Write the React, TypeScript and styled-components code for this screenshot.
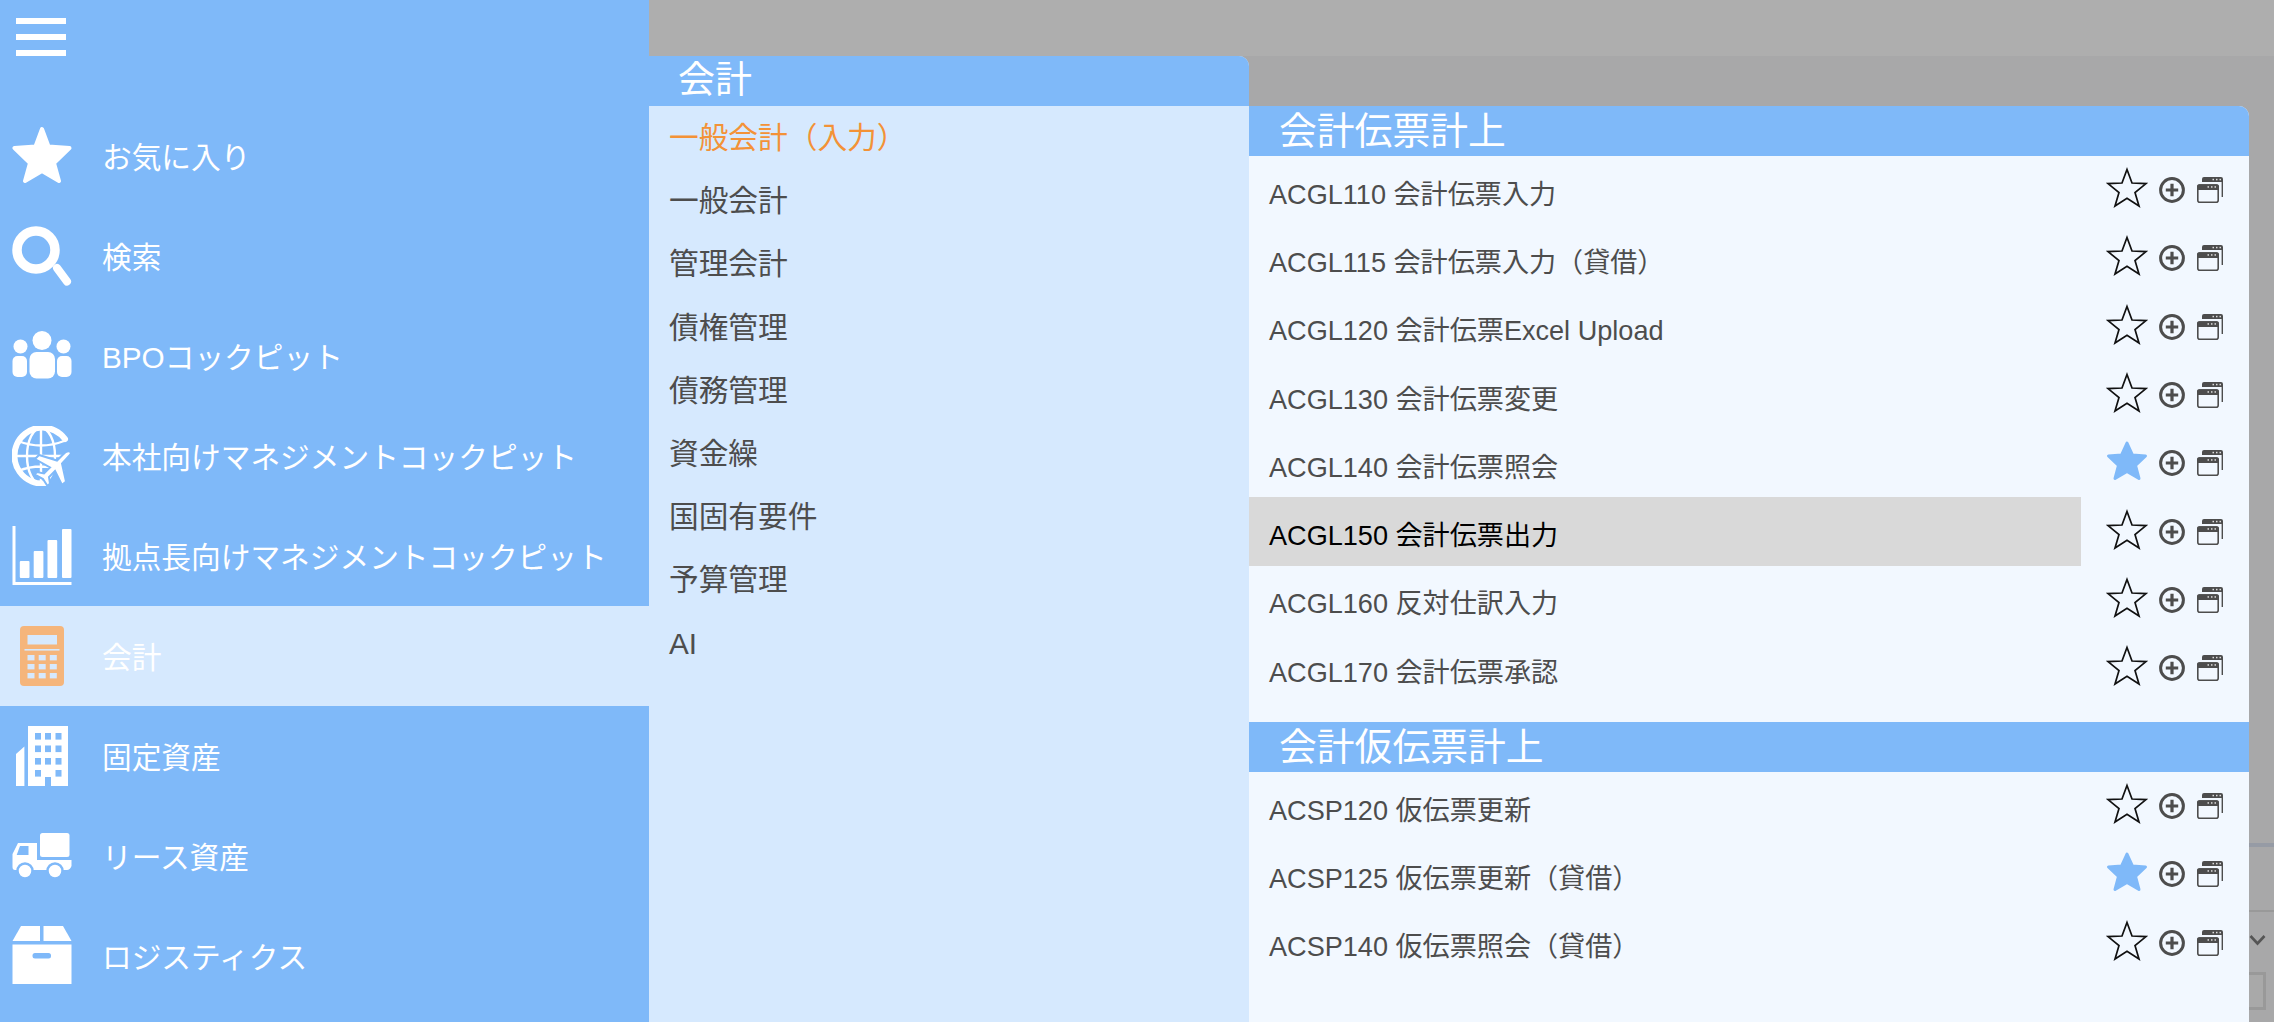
import styled, { createGlobalStyle } from "styled-components";
import type { ReactNode } from "react";

const SKY = "#7fb9f9";
const PALE = "#d6e9fe";
const ICE = "#f2f8ff";
const INK = "#4d4d4d";

const GlobalStyle = createGlobalStyle`
  html, body {
    margin: 0;
    height: 1022px;
    overflow: hidden;
    background: #a8a8a9;
  }
  body {
    font-family: "Liberation Sans", "Noto Sans CJK JP", sans-serif;
  }
`;

const Page = styled.div`
  display: flex;
  width: 2274px;
  height: 1022px;
  overflow: hidden;
`;

const Sidebar = styled.nav`
  flex: 0 0 649px;
  background: ${SKY};
`;

const SidebarHead = styled.div`
  height: 106px;
  box-sizing: border-box;
  padding: 18px 0 0 16px;
`;

const Burger = styled.div`
  display: flex;
  flex-direction: column;
  gap: 10px;
  width: 50px;

  span {
    display: block;
    height: 6px;
    background: #fff;
  }
`;

const NavRow = styled.div<{ $active?: boolean }>`
  display: flex;
  align-items: center;
  height: 100px;
  padding-left: 12px;
  background: ${(p) => (p.$active ? PALE : "transparent")};
  color: #fff;
  font-size: 29.7px;

  svg {
    flex: none;
    width: 60px;
    height: 60px;
    margin-right: 30px;
  }
`;

const NavLabel = styled.span`
  margin-bottom: 2px;
`;

const Main = styled.div`
  flex: 1;
  display: flex;
  flex-direction: column;
  min-width: 0;
`;

const TopBar = styled.div`
  flex: 0 0 56px;
  background: #aeaeae;
`;

const Body = styled.div`
  flex: 1;
  display: flex;
  min-height: 0;
`;

const SubPanel = styled.section`
  flex: 0 0 600px;
  background: ${PALE};
  border-top-right-radius: 10px;
  overflow: hidden;
`;

const SubTitle = styled.h2`
  height: 50px;
  margin: 0;
  padding-left: 29px;
  background: ${SKY};
  color: #fff;
  font-size: 37px;
  font-weight: 400;
  line-height: 50px;
`;

const SubItem = styled.div<{ $active?: boolean }>`
  height: 63.2px;
  padding-left: 20px;
  color: ${(p) => (p.$active ? "#f39237" : INK)};
  font-size: 29.7px;
  line-height: 63.2px;
`;

const DetailPanel = styled.section`
  flex: 0 0 1000px;
  margin-top: 50px;
  background: ${ICE};
  border-top-right-radius: 10px;
  overflow: hidden;
`;

const SectionTitle = styled.h3<{ $gap?: number }>`
  height: 50px;
  margin: ${(p) => p.$gap ?? 0}px 0 0;
  padding-left: 30px;
  background: ${SKY};
  color: #fff;
  font-size: 37.8px;
  font-weight: 400;
  line-height: 50px;
`;

const DetailRow = styled.div`
  display: flex;
  align-items: center;
  height: 68.3px;
`;

const RowLabel = styled.div<{ $active?: boolean }>`
  flex: 0 0 832px;
  height: 100%;
  box-sizing: border-box;
  padding: 4px 0 0 20px;
  display: flex;
  align-items: center;
  background: ${(p) => (p.$active ? "#d9d9d9" : "transparent")};
  color: ${(p) => (p.$active ? "#000" : INK)};
  font-size: 27.1px;
`;

const RowActions = styled.div`
  display: flex;
  align-items: center;
  gap: 12px;
  margin-left: 26px;
`;

const StarMark = styled.svg`
  width: 40px;
  height: 40px;
  margin-bottom: 4px;
  overflow: visible;
`;

const ToolIcon = styled.svg`
  width: 26px;
  height: 26px;
`;

const BehindStrip = styled.div`
  flex: 1;
  display: flex;
  flex-direction: column;
  min-width: 0;
`;

const BehindBlue = styled.div`
  height: 4px;
  margin-top: 787px;
  background: #969ba5;
`;

const BehindRule = styled.div`
  height: 2px;
  margin-top: 63px;
  background: #999;
`;

const BehindChevron = styled.svg`
  width: 17px;
  height: 12px;
  margin-top: 22px;
`;

const BehindInput = styled.div`
  width: 14px;
  height: 32px;
  margin-top: 26px;
  border: 3px solid #999;
  border-left: 0;
  background: #a9a9a9;
`;

function StarIcon() {
  return (
    <svg viewBox="0 0 60 60">
      <path
        d="M30 3 L36.5 20.5 L57.5 22 L42 37 L47 55 L30 45 L13 55 L18 37 L2.5 22 L23.5 20.5 Z"
        fill="#fff"
        stroke="#fff"
        strokeWidth="4"
        strokeLinejoin="round"
      />
    </svg>
  );
}

function SearchIcon() {
  return (
    <svg viewBox="0 0 60 60">
      <circle cx="24" cy="24" r="19" fill="none" stroke="#fff" strokeWidth="9.5" />
      <path d="M45 42 L55 55.5" stroke="#fff" strokeWidth="8" strokeLinecap="round" />
    </svg>
  );
}

function PeopleIcon() {
  return (
    <svg viewBox="0 0 60 60" fill="#fff">
      <circle cx="30" cy="14.5" r="9.5" />
      <circle cx="8.5" cy="20.5" r="7" />
      <circle cx="51.5" cy="20.5" r="7" />
      <rect x="17.5" y="26" width="25.5" height="26.5" rx="7" />
      <rect x="0.5" y="30" width="14.5" height="21" rx="5" />
      <rect x="45" y="30" width="14.5" height="21" rx="5" />
    </svg>
  );
}

function GlobeIcon() {
  return (
    <svg viewBox="0 0 60 60" fill="none">
      <g stroke="#fff" strokeWidth="2.4">
        <ellipse cx="29" cy="30" rx="14" ry="28" />
        <path d="M29 2 V58 M2 30 H56 M6 15 Q29 24 52 15 M6 45 Q29 36 52 45" />
      </g>
      <path
        d="M53 13 A28 28 0 1 0 33 57.5"
        stroke="#fff"
        strokeWidth="6"
        strokeLinecap="round"
      />
      <path
        d="M57 30 Q60.5 26.5 57.5 25.5 Q54.5 24.5 51 28.5 L45 34.5 L27 29 L23 33 L38 41.5 L32 47.5 L25 46 L22.5 48.5 L31 53 L35.5 60 L38 57.5 L37 51 L43 45 L50 59 L54 55.5 L50 37.5 Z"
        fill="#fff"
        stroke={SKY}
        strokeWidth="2"
      />
    </svg>
  );
}

function ChartIcon() {
  return (
    <svg viewBox="0 0 60 60" fill="#fff">
      <path d="M0.5 0 H3.5 V56 H59.5 V59 H0.5 Z" />
      <rect x="7.8" y="35" width="9.7" height="17" rx="1" />
      <rect x="21.7" y="25" width="9.7" height="27" rx="1" />
      <rect x="35.5" y="14" width="9.7" height="38" rx="1" />
      <rect x="50" y="3" width="9.5" height="49" rx="1" />
    </svg>
  );
}

function CalculatorIcon() {
  const keys = [15.5, 26.7, 37.8];
  const rows = [29, 38, 47];
  return (
    <svg viewBox="0 0 60 60">
      <rect x="8" y="0" width="44" height="60" rx="4" fill="#f5b57b" />
      <rect x="15.5" y="9" width="29.5" height="9.5" fill={PALE} />
      <rect x="12.5" y="23" width="35" height="1.6" fill={PALE} />
      {rows.map((y) =>
        keys.map((x) => (
          <rect key={`${x}-${y}`} x={x} y={y} width="7" height="5.4" fill={PALE} />
        ))
      )}
    </svg>
  );
}

function BuildingIcon() {
  const cols = [23, 33, 43.5];
  const rows = [7, 19.5, 32];
  return (
    <svg viewBox="0 0 60 60">
      <path d="M4 28 L12.4 20.5 V60 H4 Z" fill="#fff" />
      <rect x="16" y="0" width="40" height="60" fill="#fff" />
      {rows.map((y) =>
        cols.map((x) => (
          <rect key={`${x}-${y}`} x={x} y={y} width="6" height="6.6" fill={SKY} />
        ))
      )}
      <rect x="23" y="44" width="6" height="6.6" fill={SKY} />
      <rect x="43.5" y="44" width="6" height="6.6" fill={SKY} />
      <rect x="33" y="51" width="6" height="9" fill={SKY} />
    </svg>
  );
}

function TruckIcon() {
  return (
    <svg viewBox="0 0 60 60">
      <rect x="28" y="7" width="29.5" height="24" rx="2.5" fill="#fff" />
      <path
        d="M6 17 H25 V34 H59.5 V40 Q58 44 55 44 H3 Q0.5 44 0.5 41 V28 Z"
        fill="#fff"
      />
      <path d="M8 20 H16.5 V29 H4.7 Z" fill={SKY} />
      <circle cx="13" cy="45" r="7.5" fill="#fff" stroke={SKY} strokeWidth="2.5" />
      <circle cx="43" cy="45" r="7.5" fill="#fff" stroke={SKY} strokeWidth="2.5" />
    </svg>
  );
}

function BoxIcon() {
  return (
    <svg viewBox="0 0 60 60">
      <path d="M9 0 H28 V15 H0.5 Z" fill="#fff" />
      <path d="M31.5 0 H51 L59.5 15 H31.5 Z" fill="#fff" />
      <rect x="0.5" y="18.5" width="59" height="39.5" fill="#fff" />
      <rect x="20.5" y="27" width="18.5" height="5.5" rx="2.5" fill={SKY} />
    </svg>
  );
}

function OutlineStar({ filled }: { filled?: boolean }) {
  return (
    <StarMark viewBox="0 0 40 40">
      {filled ? (
        <path
          d="M20 2 L25.5 14 L38.5 15 L28.5 24.5 L32 37.5 L20 30.5 L8 37.5 L11.5 24.5 L1.5 15 L14.5 14 Z"
          fill={SKY}
          stroke={SKY}
          strokeWidth="3"
          strokeLinejoin="round"
        />
      ) : (
        <path
          d="M20 1.5 L25 15 L39 15.6 L28 24.6 L32 38 L20 30.2 L8 38 L12 24.6 L1 15.6 L15 15 Z"
          fill="none"
          stroke="#111"
          strokeWidth="1.7"
        />
      )}
    </StarMark>
  );
}

function PlusCircle() {
  return (
    <ToolIcon viewBox="0 0 26 26">
      <circle cx="13" cy="13" r="11.4" fill="none" stroke={INK} strokeWidth="3" />
      <path d="M13 6.8 V19.2 M6.8 13 H19.2" stroke={INK} strokeWidth="3.2" />
    </ToolIcon>
  );
}

function WindowsIcon() {
  return (
    <ToolIcon viewBox="0 0 26 26">
      <path d="M5 6 V2 Q5 0 7 0 H24 Q26 0 26 2 V20 H24.6 V5 H5 Z" fill={INK} />
      <rect x="15.5" y="1.8" width="1.5" height="1.5" fill="#ddd" />
      <rect x="19" y="1.8" width="1.5" height="1.5" fill="#ddd" />
      <rect x="22.5" y="1.8" width="1.5" height="1.5" fill="#ddd" />
      <rect x="0.8" y="8" width="20.4" height="17.2" rx="2" fill={ICE} stroke={INK} strokeWidth="1.6" />
      <path d="M0 13 V9.5 Q0 7.2 2.2 7.2 H19.8 Q22 7.2 22 9.5 V13 Z" fill={INK} />
      <rect x="10.5" y="9.2" width="1.5" height="1.5" fill="#ddd" />
      <rect x="14" y="9.2" width="1.5" height="1.5" fill="#ddd" />
      <rect x="17.5" y="9.2" width="1.5" height="1.5" fill="#ddd" />
    </ToolIcon>
  );
}

type NavEntry = { label: string; icon: ReactNode; active?: boolean };

const navEntries: NavEntry[] = [
  { label: "お気に入り", icon: <StarIcon /> },
  { label: "検索", icon: <SearchIcon /> },
  { label: "BPOコックピット", icon: <PeopleIcon /> },
  { label: "本社向けマネジメントコックピット", icon: <GlobeIcon /> },
  { label: "拠点長向けマネジメントコックピット", icon: <ChartIcon /> },
  { label: "会計", icon: <CalculatorIcon />, active: true },
  { label: "固定資産", icon: <BuildingIcon /> },
  { label: "リース資産", icon: <TruckIcon /> },
  { label: "ロジスティクス", icon: <BoxIcon /> },
];

const subItems = [
  "一般会計（入力）",
  "一般会計",
  "管理会計",
  "債権管理",
  "債務管理",
  "資金繰",
  "国固有要件",
  "予算管理",
  "AI",
];

type Program = { name: string; starred?: boolean; hover?: boolean };

const slipPrograms: Program[] = [
  { name: "ACGL110 会計伝票入力" },
  { name: "ACGL115 会計伝票入力（貸借）" },
  { name: "ACGL120 会計伝票Excel Upload" },
  { name: "ACGL130 会計伝票変更" },
  { name: "ACGL140 会計伝票照会", starred: true },
  { name: "ACGL150 会計伝票出力", hover: true },
  { name: "ACGL160 反対仕訳入力" },
  { name: "ACGL170 会計伝票承認" },
];

const tempPrograms: Program[] = [
  { name: "ACSP120 仮伝票更新" },
  { name: "ACSP125 仮伝票更新（貸借）", starred: true },
  { name: "ACSP140 仮伝票照会（貸借）" },
];

function ProgramRow({ program }: { program: Program }) {
  return (
    <DetailRow>
      <RowLabel $active={program.hover}>{program.name}</RowLabel>
      <RowActions>
        <OutlineStar filled={program.starred} />
        <PlusCircle />
        <WindowsIcon />
      </RowActions>
    </DetailRow>
  );
}

export default function App() {
  return (
    <Page>
      <GlobalStyle />
      <Sidebar>
        <SidebarHead>
          <Burger>
            <span />
            <span />
            <span />
          </Burger>
        </SidebarHead>
        {navEntries.map((n) => (
          <NavRow key={n.label} $active={n.active}>
            {n.icon}
            <NavLabel>{n.label}</NavLabel>
          </NavRow>
        ))}
      </Sidebar>
      <Main>
        <TopBar />
        <Body>
          <SubPanel>
            <SubTitle>会計</SubTitle>
            {subItems.map((s, i) => (
              <SubItem key={s} $active={i === 0}>
                {s}
              </SubItem>
            ))}
          </SubPanel>
          <DetailPanel>
            <SectionTitle>会計伝票計上</SectionTitle>
            {slipPrograms.map((p) => (
              <ProgramRow key={p.name} program={p} />
            ))}
            <SectionTitle $gap={19.6}>会計仮伝票計上</SectionTitle>
            {tempPrograms.map((p) => (
              <ProgramRow key={p.name} program={p} />
            ))}
          </DetailPanel>
          <BehindStrip>
            <BehindBlue />
            <BehindRule />
            <BehindChevron viewBox="0 0 17 12">
              <path d="M1.5 2 L8.5 9.5 L15.5 2" fill="none" stroke="#555" strokeWidth="2.6" />
            </BehindChevron>
            <BehindInput />
          </BehindStrip>
        </Body>
      </Main>
    </Page>
  );
}
